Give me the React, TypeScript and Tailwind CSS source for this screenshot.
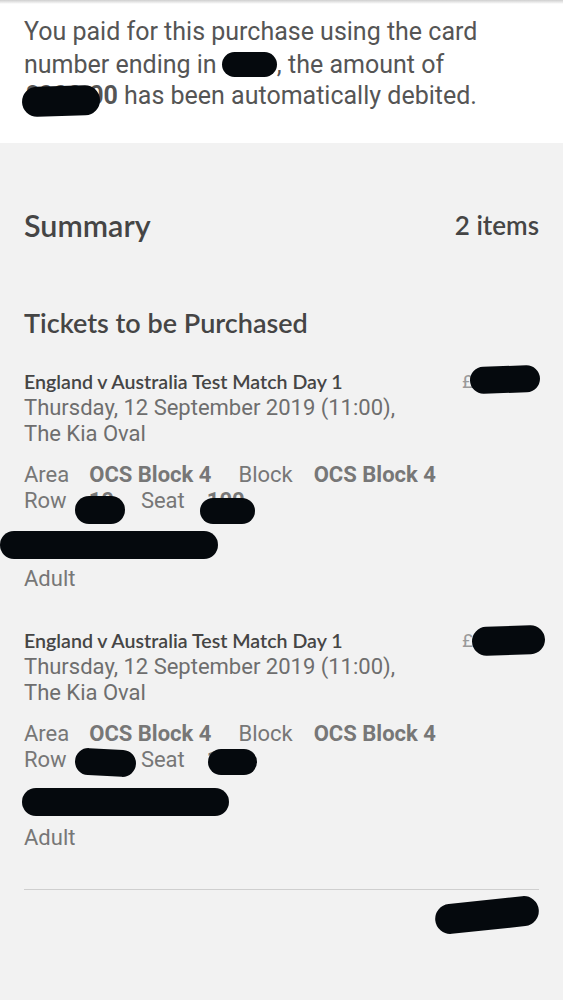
import React from "react";

const Blob = ({ className }: { className: string }) => (
  <span className={"absolute block rounded-full bg-[#05090d] " + className} />
);

type TicketProps = {
  priceBlob: string;
  rowBlob: string;
  seatBlob: string;
  nameBlob: string;
  nameMt: string;
  adultMt: string;
};

const Ticket = ({ priceBlob, rowBlob, seatBlob, nameBlob, nameMt, adultMt }: TicketProps) => (
  <div>
    <div className="flex justify-between">
      <div className="font-['Lato',sans-serif] text-[19.6px] font-semibold leading-[26px] text-[#454545]">
        England v Australia Test Match Day 1
      </div>
      <div className="relative w-[77px] font-['Roboto',sans-serif] text-[19px] leading-[26px] text-[#9a9a9a]">
        £00.00
        <Blob className={priceBlob} />
      </div>
    </div>
    <div className="font-['Roboto',sans-serif] text-[22px] leading-[26px] text-[#6e6e6e]">
      <div>Thursday, 12 September 2019 (11:00),</div>
      <div>The Kia Oval</div>
    </div>
    <div className="mt-[15px] font-['Roboto',sans-serif] text-[22px] leading-[26px] text-[#777]">
      <div className="flex">
        <span>Area</span>
        <span className="ml-[20px] font-bold">OCS Block 4</span>
        <span className="ml-[27px]">Block</span>
        <span className="ml-[21px] font-bold">OCS Block 4</span>
      </div>
      <div className="relative flex">
        <span>Row</span>
        <span className="ml-[22px] font-bold">10</span>
        <span className="ml-[27px]">Seat</span>
        <span className="ml-[22px] font-bold">100</span>
        <Blob className={rowBlob} />
        <Blob className={seatBlob} />
      </div>
    </div>
    <div className={"h-[28px] rounded-full bg-[#05090d] " + nameMt + " " + nameBlob} />
    <div className={"font-['Roboto',sans-serif] text-[22px] leading-[26px] text-[#777] " + adultMt}>Adult</div>
  </div>
);

export default function App() {
  return (
    <div className="min-h-[1000px] bg-[#f2f2f2]">
      <div className="bg-white">
        <div className="h-[4px] bg-gradient-to-b from-[#cfcfcf] to-white" />
        <p className="px-6 pt-3 pb-[31px] font-['Roboto',sans-serif] text-[25px] leading-[31.5px] text-[#555]">
          You paid for this purchase using the card number ending in{" "}
          <span className="relative -ml-[1px] inline-block h-[25px] w-[55px] translate-y-[4px] rounded-full bg-[#05090d] align-baseline" />
          , the amount of{" "}
          <span className="relative font-bold">
            £000.00
            <Blob className="-left-[2px] top-[5px] h-[30px] w-[78px] -rotate-2" />
          </span>{" "}
          has been automatically debited.
        </p>
      </div>

      <div className="px-6">
        <div className="mt-[64px] flex items-center justify-between font-['Lato',sans-serif] text-[#454545]">
          <h2 className="text-[30.5px] font-semibold leading-[36px]">Summary</h2>
          <span className="text-[26px] font-semibold leading-[36px]">2 items</span>
        </div>

        <h3 className="mt-[64px] font-['Lato',sans-serif] text-[27px] font-semibold leading-[32px] text-[#454545]">
          Tickets to be Purchased
        </h3>

        <div className="mt-[30px]">
          <Ticket
            priceBlob="left-[8px] -top-[3px] h-[27px] w-[70px] -rotate-2"
            rowBlob="left-[51px] top-[8px] h-[28px] w-[50px]"
            seatBlob="left-[176px] top-[10px] h-[26px] w-[55px]"
            nameBlob="-ml-6 w-[218px]"
            nameMt="mt-[17px]"
            adultMt="mt-[7px]"
          />
        </div>

        <div className="mt-[36px]">
          <Ticket
            priceBlob="left-[10px] -top-[2px] h-[29px] w-[73px] -rotate-2"
            rowBlob="left-[51px] top-[2px] h-[27px] w-[61px] rotate-3"
            seatBlob="left-[184px] top-[2px] h-[26px] w-[49px]"
            nameBlob="-ml-[2px] w-[207px]"
            nameMt="mt-[15px]"
            adultMt="mt-[9px]"
          />
        </div>

        <div className="mt-[38px] h-px bg-[#cfcfcf]" />

        <div className="flex justify-end pt-[10px]">
          <div className="h-[30px] w-[104px] -rotate-6 rounded-full bg-[#05090d]" />
        </div>
      </div>
    </div>
  );
}
